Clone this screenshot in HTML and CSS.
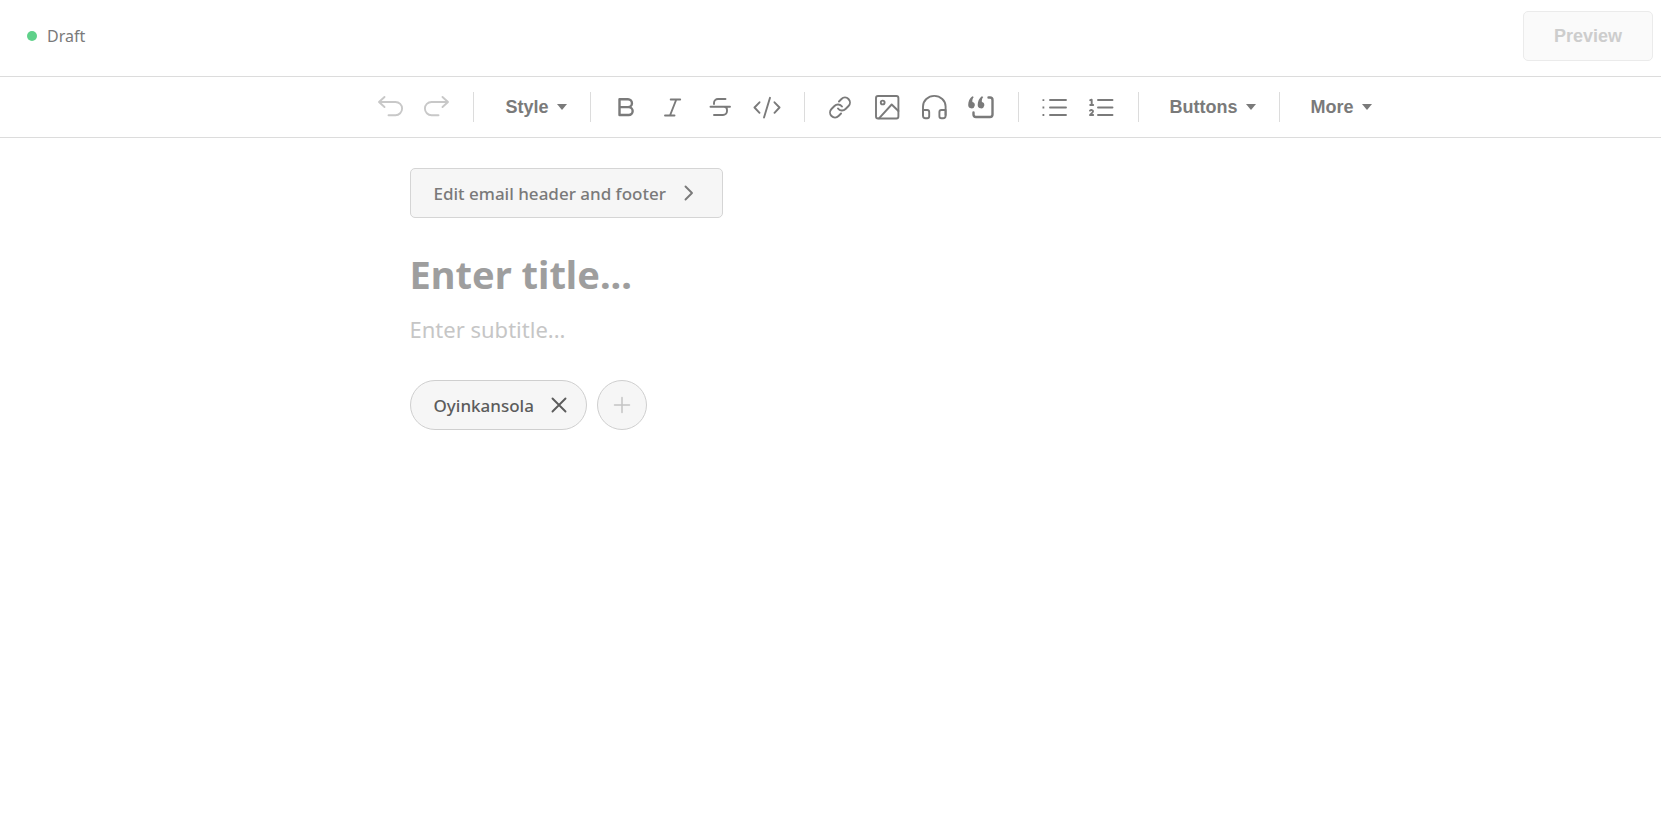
FILE: index.html
```html
<!DOCTYPE html>
<html lang="en">
<head>
<meta charset="utf-8">
<meta name="viewport" content="width=device-width, initial-scale=1">
<title>Draft</title>
<link rel="stylesheet" href="styles.css">
</head>
<body>
<header class="topbar">
  <div class="status"><span class="status-dot"></span><span>Draft</span></div>
  <button class="preview" type="button" disabled>Preview</button>
</header>
<div class="toolbar" role="toolbar" aria-label="Formatting">
  <button class="tool tool-off" type="button" aria-label="Undo"><svg viewBox="0 0 30 30"><path d="M9.500 5 4 10l5.500 5M4 10h16.500a6.600 6.600 0 0 1 0 13.200h-7"/></svg></button>
  <button class="tool tool-off" type="button" aria-label="Redo"><svg viewBox="0 0 30 30"><path d="M20.500 5l5.500 5-5.500 5M26 10H9.500a6.600 6.600 0 0 0 0 13.200h7"/></svg></button>
  <span class="divider"></span>
  <button class="menu" type="button">Style<svg class="caret" viewBox="0 0 10 6"><path d="M0 0h10L5 6z"/></svg></button>
  <span class="divider"></span>
  <button class="tool" type="button" aria-label="Bold"><svg class="heavy" viewBox="0 0 30 30"><path d="M8.500 7.200h8.500a3.900 3.900 0 0 1 0 7.900H8.500zM8.500 15.100h9.200a3.900 3.900 0 0 1 0 7.900H8.500z"/></svg></button>
  <button class="tool" type="button" aria-label="Italic"><svg viewBox="0 0 30 30"><path d="M12.700 7.500h9.500M7 23.500h9.500M18.300 7.500 12 23.500"/></svg></button>
  <button class="tool" type="button" aria-label="Strikethrough"><svg viewBox="0 0 30 30"><path d="M5.500 14.800h19.500M20.500 7H13a4 4 0 0 0-4 4v1M9 23h9a4 4 0 0 0 4-4v-1c0-2-1-3.200-3-3.200"/></svg></button>
  <button class="tool" type="button" aria-label="Code"><svg viewBox="0 0 30 30"><path d="M7.500 10.300 2.500 15.500 7.500 20.800M22.500 10.300 27.500 15.500 22.500 20.800M18 5.800 12 25.500"/></svg></button>
  <span class="divider"></span>
  <button class="tool" type="button" aria-label="Link"><svg viewBox="0 0 30 30"><g transform="translate(3 3.500)"><path d="M10 13a5 5 0 0 0 7.540.54l3-3a5 5 0 0 0-7.070-7.070l-2.500 2.500M14 11a5 5 0 0 0-7.540-.54l-3 3a5 5 0 0 0 7.070 7.070l2.500-2.500"/></g></svg></button>
  <button class="tool" type="button" aria-label="Image"><svg viewBox="0 0 30 30"><rect x="4" y="4" width="22.400" height="22.500" rx="2"/><circle cx="10.700" cy="10.500" r="1.900"/><path d="M7 26.300 19.700 12.500l6.700 6.500"/></svg></button>
  <button class="tool" type="button" aria-label="Audio"><svg viewBox="0 0 30 30"><path d="M4 23v-8.500a11.300 10.600 0 0 1 22.600 0V23"/><path d="M4 18h4.200a2 2 0 0 1 2 2v4.300a2 2 0 0 1-2 2H6.500A2.500 2.500 0 0 1 4 23.800zM26.600 18h-4.200a2 2 0 0 0-2 2v4.300a2 2 0 0 0 2 2h1.700a2.500 2.500 0 0 0 2.500-2.500z"/></svg></button>
  <button class="tool" type="button" aria-label="Quote"><svg class="heavy" viewBox="0 0 30 30"><path d="M22.500 5.500H24A2.500 2.500 0 0 1 26.500 8v14.500A2.500 2.500 0 0 1 24 25H10a2.500 2.500 0 0 1-2.500-2.500V20.500"/><path class="solid" d="M6.300 4.200C3.600 6 2.200 9.500 2.200 13a3.300 3.300 0 1 0 4.200-3.100c-.2-2 .2-3.700 1.400-5zM15.800 4.200C13.100 6 11.700 9.500 11.700 13a3.300 3.300 0 1 0 4.200-3.100c-.2-2 .2-3.700 1.400-5z"/></svg></button>
  <span class="divider"></span>
  <button class="tool" type="button" aria-label="Bulleted list"><svg viewBox="0 0 30 30"><path d="M11 8h16M11 15.500h16M11 23h16"/><path class="solid" d="M3.500 7.200h1.800V9H3.500zM3.500 14.600h1.800v1.800H3.500zM3.500 22.100h1.800v1.800H3.500z"/></svg></button>
  <button class="tool" type="button" aria-label="Numbered list"><svg viewBox="0 0 30 30"><path d="M12 8h14.500M12 15.500h14.500M12 23h14.500"/><path d="M4.200 8.200 5.700 7.700V13M4.200 13h3M4 18.700c1-1 3.200-.8 3 .8-.1 1.200-2 2.200-3 3.500h3.200"/></svg></button>
  <span class="divider"></span>
  <button class="menu" type="button">Buttons<svg class="caret" viewBox="0 0 10 6"><path d="M0 0h10L5 6z"/></svg></button>
  <span class="divider"></span>
  <button class="menu" type="button">More<svg class="caret" viewBox="0 0 10 6"><path d="M0 0h10L5 6z"/></svg></button>
</div>
<main class="editor">
  <button class="edit-header" type="button">Edit email header and footer<svg viewBox="0 0 26 26"><path d="M9.500 6.500 16 13l-6.500 6.500"/></svg></button>
  <input class="title" type="text" placeholder="Enter title..." aria-label="Title">
  <input class="subtitle" type="text" placeholder="Enter subtitle..." aria-label="Subtitle">
  <div class="authors">
    <button class="author" type="button">Oyinkansola<svg viewBox="0 0 26 26"><path d="m6.500 6.500 13 13M19.500 6.500l-13 13"/></svg></button>
    <button class="add" type="button" aria-label="Add author"><svg viewBox="0 0 26 26"><path d="M13 5.500v15M5.500 13h15"/></svg></button>
  </div>
</main>
</body>
</html>
```

FILE: styles.css
```css
* {
  box-sizing: border-box;
}

body {
  margin: 0;
  background: #fff;
  color: #7a7a7a;
  font-family: "Segoe UI", "Noto Sans", "Open Sans", sans-serif;
  font-size: 17px;
}

button {
  margin: 0;
  padding: 0;
  border: 0;
  background: none;
  color: inherit;
  font: inherit;
}

svg {
  flex: none;
  fill: none;
  stroke: currentColor;
  stroke-width: 1.9;
  stroke-linecap: round;
  stroke-linejoin: round;
}

.topbar {
  display: flex;
  justify-content: space-between;
  align-items: flex-start;
  padding: 11px 8px 15px 27px;
  border-bottom: 1px solid #dcdcdc;
}

.status {
  display: flex;
  align-items: center;
  gap: 10px;
  height: 50px;
  font-size: 16px;
}

.status-dot {
  width: 10px;
  height: 10px;
  border-radius: 50%;
  background: #5fd18a;
}

.preview {
  height: 50px;
  padding: 0 30px;
  border: 1px solid #ebebeb;
  border-radius: 5px;
  background: #fafafa;
  color: #cdcdcd;
  font-family: "Liberation Sans", Arial, sans-serif;
  font-size: 18px;
  font-weight: 700;
}

.toolbar {
  display: flex;
  justify-content: center;
  align-items: center;
  height: 61px;
  padding-left: 87px;
  border-bottom: 1px solid #dcdcdc;
}

.tool {
  display: flex;
  justify-content: center;
  align-items: center;
  width: 47px;
  height: 48px;
}

.tool svg {
  width: 30px;
  height: 30px;
}

.tool .heavy {
  stroke-width: 2.4;
}

.tool .solid {
  fill: currentColor;
  stroke: none;
}

.tool-off {
  color: #c8c8c8;
}

.divider {
  width: 1px;
  height: 30px;
  margin: 0 12px 0 13px;
  background: #dcdcdc;
}

.menu {
  display: flex;
  align-items: center;
  gap: 8px;
  height: 48px;
  padding: 0 10px 0 19px;
  font-family: "Liberation Sans", Arial, sans-serif;
  font-size: 18px;
  font-weight: 700;
}

.caret {
  width: 10px;
  height: 6px;
  fill: currentColor;
  stroke: none;
}

.editor {
  display: flex;
  flex-direction: column;
  align-items: flex-start;
  max-width: 842px;
  margin: 0 auto;
  padding-top: 30px;
}

.edit-header {
  display: flex;
  align-items: center;
  gap: 10px;
  height: 50px;
  padding: 0 20px 0 23px;
  border: 1px solid #d5d5d5;
  border-radius: 5px;
  background: #f6f6f6;
  font-weight: 500;
}

.edit-header svg,
.author svg,
.add svg {
  width: 26px;
  height: 26px;
}

.title,
.subtitle {
  width: 100%;
  padding: 0;
  border: 0;
  outline: 0;
  background: none;
  color: #363737;
  font-family: inherit;
}

.title {
  height: 56px;
  margin-top: 28px;
  font-size: 38px;
  font-weight: 700;
}

.subtitle {
  height: 36px;
  margin-top: 9px;
  font-size: 22px;
}

.title::placeholder {
  color: #9e9e9e;
}

.subtitle::placeholder {
  color: #c6c6c6;
}

.authors {
  display: flex;
  gap: 10px;
  margin-top: 33px;
}

.author,
.add {
  display: flex;
  align-items: center;
  height: 50px;
  border: 1px solid #cfcfcf;
  border-radius: 25px;
  background: #f6f6f6;
}

.author {
  gap: 12px;
  padding: 0 14px 0 23px;
  color: #5c5c5c;
  font-weight: 500;
}

.add {
  justify-content: center;
  width: 50px;
  color: #c4c4c4;
}

.add svg {
  stroke-width: 1.5;
}
```
